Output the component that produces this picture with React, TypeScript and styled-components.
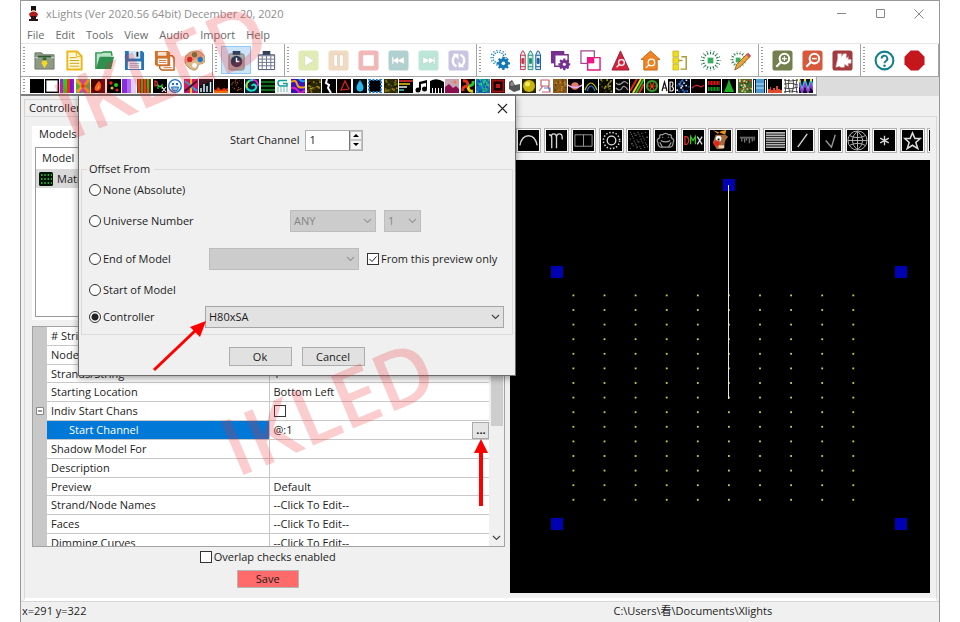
import React from 'react';
import styled, { createGlobalStyle } from 'styled-components';

const GlobalStyle = createGlobalStyle`
  * { box-sizing: border-box; }
  body { margin: 0; background: #fff; }
  body, button, input, select, table {
    font-family: "Open Sans", "Noto Sans CJK SC", sans-serif;
    font-size: 11px;
    line-height: 14px;
    color: #1c1c1c;
  }
  button { padding: 0; border: 0; background: none; }
  svg { display: block; flex: none; }
`;

/* ---------- window frame ---------- */

const Page = styled.div`
  padding: 0 20px;
`;
const Window = styled.main`
  position: relative;
  display: flex;
  flex-direction: column;
  min-height: 100vh;
  border: 1px solid #989898;
  background: #fff;
  overflow: hidden;
`;
const TitleBar = styled.header`
  display: flex;
  align-items: center;
  height: 25px;
  padding: 0 4px 0 7px;
  gap: 7px;
`;
const Title = styled.h1`
  flex: 1;
  margin: 0;
  font-size: 11px;
  font-weight: 400;
  color: #8e8e8e;
`;
const CaptionButton = styled.button`
  display: grid;
  place-items: center;
  width: 32px;
  height: 24px;
`;
const MenuBar = styled.nav`
  display: flex;
  align-items: center;
  gap: 11px;
  height: 17px;
  padding-left: 6px;
`;
const MenuLink = styled.a`
  color: #6a6a6a;
  text-decoration: none;
`;

/* ---------- toolbars ---------- */

const ToolRow = styled.div`
  display: flex;
  height: 34px;
  border-top: 1px solid #e6e6e6;
  border-bottom: 1px solid #a6a6a6;
`;
const ToolGroup = styled.div<{ $grow?: boolean }>`
  display: flex;
  align-items: center;
  flex: ${(p) => (p.$grow ? '1' : 'none')};
  padding: 0 3px 0 2px;
  border-right: 1px solid #a6a6a6;
`;
const Grip = styled.span<{ $tall?: boolean }>`
  width: 2px;
  height: ${(p) => (p.$tall ? '26px' : '14px')};
  margin-right: 4px;
  background: repeating-linear-gradient(#9c9c9c 0 1px, transparent 1px 3px);
`;
const ToolButton = styled.button<{ $active?: boolean; $dim?: boolean }>`
  display: grid;
  place-items: center;
  width: 30px;
  height: 28px;
  border: 1px solid ${(p) => (p.$active ? '#90c8f6' : 'transparent')};
  background: ${(p) => (p.$active ? '#cce4f7' : 'none')};
  opacity: ${(p) => (p.$dim ? 0.5 : 1)};
`;
const EffectStrip = styled.div`
  background: #dcdcdc;
`;
const EffectBar = styled.div`
  display: flex;
  align-items: center;
  width: 86.7%;
  height: 19px;
  padding-left: 2px;
  border-right: 1px solid #a6a6a6;
  border-bottom: 2px solid #7d7d7d;
  background: #fff;
`;
const EffectGrid = styled.div`
  flex: 1;
  display: grid;
  grid-template-columns: repeat(51, minmax(0, 1fr));
  padding-right: 2px;
`;
const EffectButton = styled.button`
  display: grid;
  place-items: center;
`;

/* ---------- notebook ---------- */

const Notebook = styled.section`
  flex: 1;
  display: flex;
  flex-direction: column;
  padding: 3px 2px 0 3px;
  background: #f0f0f0;
`;
const Tabs = styled.div`
  display: flex;
`;
const Tab = styled.button`
  height: 17px;
  padding: 0 4px;
  border: 1px solid #d4d4d4;
  border-bottom: 0;
`;
const Panel = styled.div`
  flex: 1;
  display: flex;
  padding: 1px;
  border: solid #d9d9d9;
  border-width: 1px 1px 0;
  border-bottom: 3px solid #fff;
  background: #f0f0f0;
`;
const LeftColumn = styled.div`
  flex: none;
  width: 53.3%;
  padding: 8px 5px 0 6px;
`;
const ModelsBox = styled.section`
  padding: 0 3px 3px;
  background: #fff;
  margin-bottom: 6px;
`;
const ModelsTitle = styled.h2`
  margin: 0;
  padding: 1px 0 6px 4px;
  font-size: 11px;
  font-weight: 400;
`;
const ModelList = styled.div`
  height: 170px;
  border: 1px solid #9a9a9a;
`;
const ListHead = styled.div`
  padding: 3px 6px 4px;
`;
const ListRow = styled.div`
  display: flex;
  align-items: center;
  gap: 4px;
  height: 19px;
  padding-left: 3px;
  background: #d9d9d9;
`;

/* ---------- property grid ---------- */

const PropertyFrame = styled.div`
  display: flex;
  height: 221px;
  border: 1px solid #a2a2a2;
  overflow: hidden;
`;
const PropertyTable = styled.table`
  flex: 1;
  height: 226px;
  table-layout: fixed;
  border-collapse: collapse;
  background: #fff;
`;
const GutterCell = styled.td`
  width: 14px;
  padding: 0 0 0 3px;
  background: #c8c8c8;
`;
const NameCell = styled.th<{ $selected?: boolean; $indent?: boolean }>`
  width: 222px;
  padding: 0 0 0 ${(p) => (p.$indent ? '22px' : '4px')};
  border: solid #c8c8c8;
  border-width: 0 1px 1px 0;
  font-weight: 400;
  text-align: left;
  color: ${(p) => (p.$selected ? '#fff' : 'inherit')};
  background: ${(p) => (p.$selected ? '#0078d7' : '#fff')};
`;
const ValueCell = styled.td`
  padding: 0 0 0 4px;
  border-bottom: 1px solid #c8c8c8;
`;
const ValueLine = styled.div`
  display: flex;
  justify-content: space-between;
  align-items: center;
  height: 17px;
`;
const EllipsisButton = styled.button`
  width: 17px;
  height: 17px;
  border: 1px solid #a9a9a9;
  background: #e4e4e4;
  font-weight: 700;
`;
const ScrollTrack = styled.div`
  display: flex;
  flex-direction: column;
  justify-content: space-between;
  align-items: center;
  width: 15px;
  padding: 0 1px 5px;
  background: #f0f0f0;
`;
const ScrollThumb = styled.div`
  width: 12px;
  height: 99px;
  background: #cdcdcd;
`;
const Footer = styled.div`
  display: flex;
  flex-direction: column;
  align-items: center;
  gap: 6px;
  padding: 3px 2px 0 0;
`;
const SaveButton = styled.button`
  width: 62px;
  height: 18px;
  border: 1px solid #b5b5b5;
  background: #ff6b6b;
`;

/* ---------- shared form parts ---------- */

const CheckLabel = styled.label`
  display: flex;
  align-items: center;
  gap: 2px;
`;
const Check = styled.input`
  appearance: none;
  flex: none;
  width: 12px;
  height: 12px;
  margin: 0;
  border: 1px solid #333;
  background: #fff;
  &:checked {
    background: #fff url("data:image/svg+xml,%3Csvg xmlns='http://www.w3.org/2000/svg' viewBox='0 0 10 10'%3E%3Cpath d='M1.5 5 4 7.500 8.500 2.500' fill='none' stroke='%23222'/%3E%3C/svg%3E") center / 10px;
  }
`;
const Radio = styled.input`
  appearance: none;
  flex: none;
  width: 12px;
  height: 12px;
  margin: 0;
  border: 1px solid #333;
  border-radius: 50%;
  background: #fff;
  &:checked { background: radial-gradient(circle, #222 0 3px, #fff 4px); }
`;

/* ---------- preview ---------- */

const PreviewColumn = styled.div`
  flex: 1;
  min-width: 0;
  display: flex;
  flex-direction: column;
  padding: 10px 5px 4px 0;
`;
const ModelBar = styled.div`
  display: grid;
  grid-template-columns: repeat(15, minmax(0, 1fr)) 3px;
  height: 32px;
  padding-left: 6px;
  overflow: hidden;
`;
const ModelButton = styled.button`
  display: grid;
  place-items: center;
  width: 25px;
  height: 25px;
  border: 1px solid #b4b4b4;
  background: #fdfdfd;
`;
const Canvas = styled.div`
  flex: 1;
  background: #000;
  overflow: hidden;
`;
const StatusBar = styled.footer`
  display: grid;
  grid-template-columns: 64.5% 1fr;
  align-items: center;
  height: 21px;
  padding: 0 0 2px 1px;
  border-top: 1px solid #d6d6d6;
  background: #f0f0f0;
`;

/* ---------- dialog ---------- */

const Dialog = styled.section`
  position: absolute;
  top: 94px;
  left: 57px;
  width: 438px;
  border: 1px solid #6b6b6b;
  background: #f0f0f0;
  box-shadow: 0 2px 7px rgba(0, 0, 0, 0.4);
`;
const DialogTitle = styled.header`
  display: flex;
  justify-content: flex-end;
  align-items: center;
  height: 25px;
  padding-right: 7px;
  background: #fff;
`;
const StartRow = styled.div`
  display: flex;
  align-items: center;
  gap: 5px;
  height: 38px;
  padding-left: 151px;
`;
const Spin = styled.div`
  display: flex;
  width: 58px;
  height: 21px;
  border: 1px solid #b0b0b0;
`;
const SpinInput = styled.input`
  flex: 1;
  min-width: 0;
  padding: 0 4px;
  border: 0;
  border-right: 1px solid #777;
  background: #fff;
`;
const SpinButtons = styled.div`
  display: grid;
  grid-template-rows: 1fr 1fr;
  width: 12px;
`;
const SpinButton = styled.button`
  display: grid;
  place-items: center;
  border: 1px solid #c4c4c4;
  background: #f4f4f4;
`;
const Group = styled.fieldset`
  margin: 3px 2px 0;
  padding: 0 8px 0 5px;
  border: 1px solid #dadada;
`;
const Legend = styled.legend`
  padding: 0 4px 0 2px;
`;
const OptionRow = styled.div<{ $height: number }>`
  display: flex;
  align-items: center;
  height: ${(p) => p.$height}px;
  padding-left: 2px;
`;
const OptionLabel = styled.label<{ $width?: number }>`
  display: flex;
  align-items: center;
  gap: 2px;
  flex: none;
  width: ${(p) => (p.$width ? `${p.$width}px` : 'auto')};
`;
const Combo = styled.span<{ $width?: number; $gap?: number; $off?: boolean }>`
  display: grid;
  grid-template-columns: 1fr 16px;
  align-items: center;
  flex: ${(p) => (p.$width ? 'none' : '1')};
  width: ${(p) => (p.$width ? `${p.$width}px` : 'auto')};
  height: 22px;
  margin-right: ${(p) => p.$gap || 0}px;
  border: 1px solid ${(p) => (p.$off ? '#bdbdbd' : '#a6a6a6')};
  background: ${(p) => (p.$off ? '#cccccc' : '#e2e2e2')};
`;
const ComboSelect = styled.select`
  appearance: none;
  grid-area: 1 / 1 / 2 / 3;
  width: 100%;
  height: 20px;
  padding: 0 3px;
  border: 0;
  background: none;
  opacity: 1;
  &:disabled { color: #848484; }
`;
const ComboArrow = styled.span`
  display: grid;
  place-items: center;
  grid-area: 1 / 2;
  pointer-events: none;
`;
const DialogButtons = styled.div`
  display: flex;
  justify-content: center;
  gap: 10px;
  padding: 12px 1px 9px 0;
`;
const DialogButton = styled.button`
  width: 63px;
  height: 19px;
  border: 1px solid #adadad;
  background: #e1e1e1;
`;

/* ---------- annotations ---------- */

const Watermark = styled.span<{ $x: number; $y: number }>`
  position: absolute;
  left: ${(p) => p.$x}px;
  top: ${(p) => p.$y}px;
  transform: translate(-50%, -50%) rotate(-23deg);
  font-size: 80px;
  font-weight: 600;
  line-height: 80px;
  color: rgba(240, 40, 48, 0.23);
  pointer-events: none;
`;
const Pointer = styled.svg<{ $x: number; $y: number }>`
  position: absolute;
  left: ${(p) => p.$x}px;
  top: ${(p) => p.$y}px;
  pointer-events: none;
`;

/* ---------- drawings ---------- */

const burst = (cx: number, cy: number, r1: number, r2: number, n: number) =>
  Array.from({ length: n }, (_, i) => {
    const a = (i / n) * Math.PI * 2;
    return `M${(cx + r1 * Math.cos(a)).toFixed(1)} ${(cy + r1 * Math.sin(a)).toFixed(1)}L${(cx + r2 * Math.cos(a)).toFixed(1)} ${(cy + r2 * Math.sin(a)).toFixed(1)}`;
  }).join('');

const Gear = ({ x, y, r, c }: { x: number; y: number; r: number; c: string }) => (
  <g>
    <path d={burst(x, y, r - 1, r + 1.6, 8)} stroke={c} strokeWidth="2.4" />
    <circle cx={x} cy={y} r={r} fill={c} />
    <circle cx={x} cy={y} r={r * 0.35} fill="#fff" />
  </g>
);
const Crayon = ({ x, c }: { x: number; c: string }) => (
  <g stroke={c} fill="#d8eef2">
    <path d={`M${x} 20.500V5l2-4h1l2 4v15.500z`} />
    <path d={`M${x} 5.500h5M${x} 17.500h5`} />
    <path d={`M${x + 1.5} 9h2v5h-2z`} fill={c} />
  </g>
);
const Lens = ({ x, y, r }: { x: number; y: number; r: number }) => (
  <g fill="none" stroke="#fff" strokeWidth={r > 4 ? 2.2 : 1.3}>
    <circle cx={x} cy={y} r={r} />
    <path d={`M${x - r * 0.7} ${y + r * 0.7}l-${r} ${r}`} />
  </g>
);
const Sheet = ({ c, children }: { c: string; children?: React.ReactNode }) => (
  <g><rect x="0.500" y="0.500" width="21" height="21" rx="3" fill={c} />{children}</g>
);

const toolGroups: { name: string; art: React.ReactNode; active?: boolean; dim?: boolean }[][] = [
  [
    { name: 'Show folder', art: <><path d="M1 3h7l2 2h11v15H1z" fill="#8f9a86" stroke="#6c7666" /><path d="M1 8h20" stroke="#dfe3d8" /><path d="M4 7h14" stroke="#2e5c2f" strokeWidth="2" /><path d="M9 8h4v3h-4z" fill="#2c6b2f" /><path d="M9 11h4l1 3-3 5-3-5z" fill="#f6d91c" /></> },
    { name: 'New', art: <><path d="M3.500 1.500h10l5 5v14h-15z" fill="#fff8d6" stroke="#eab818" strokeWidth="2" /><path d="M13 2v5h5" fill="none" stroke="#eab818" /><path d="M6 8h7M6 11h10M6 14h10M6 17h10" stroke="#d0a31c" /></> },
    { name: 'Open', art: <><path d="M2 20V3h6l2-1h8l1 4" fill="#b9e5c6" stroke="#2d9150" strokeWidth="1.5" /><path d="M6 7h15l-3 13H2z" fill="#2f8f4e" /></> },
    { name: 'Save', art: <><path d="M1 1h18l2 2v18H1z" fill="#2474b9" /><path d="M5 1h12v8H5z" fill="#d5e8f6" /><path d="M13 2h2v5h-2z" fill="#222" /><path d="M4 12h14v8H4z" fill="#fff" /><path d="M6 14h10M6 16h10M6 18h10" stroke="#7aa6cd" /></> },
    { name: 'Save as', art: <><path d="M6 6h13l2 2v13H8l-2-2z" fill="#fff" stroke="#b8641e" strokeWidth="1.5" /><path d="M1 1h14l2 2v14H3l-2-2z" fill="#d0702a" /><path d="M4 2h9v4H4z" fill="#f7e3d2" /><path d="M4 9h10v6H4z" fill="#fff" /><path d="M5 11h8M5 13h8M10 18.500h9" stroke="#c97b44" /></> },
    { name: 'Colors', art: <><path d="M1 11C1 5 6 1 12 1s10 4 10 9-4 4-6 5-1 6-5 6S1 17 1 11z" fill="#dcb98c" stroke="#b98d58" /><circle cx="6" cy="10" r="2.800" fill="#cf2328" /><circle cx="11" cy="5" r="2.800" fill="#5d7f3a" /><circle cx="17" cy="10" r="2.800" fill="#2375bd" /><circle cx="11" cy="16" r="2.500" fill="#fff" /></> },
  ],
  [
    { name: 'Clock', active: true, art: <><rect x="3" y="4" width="16" height="17" rx="2" fill="#a8a8a8" stroke="#858585" /><path d="M7 1h8v4H7z" fill="#33405a" /><circle cx="11" cy="12" r="6" fill="#2b3754" /><path d="M11 8v4h3" stroke="#fff" strokeWidth="1.500" fill="none" /></> },
    { name: 'Calendar', art: <><path d="M2.500 5h17v15.500h-17z" fill="#fff" stroke="#4c546c" /><path d="M3 6h16M2 9.500h18M2 13h18M2 16.500h18M6.500 6v15M11 6v15M15.500 6v15" stroke="#6c738a" /><path d="M7 1h8v4H7z" fill="#33405a" /></> },
  ],
  [
    { name: 'Play', dim: true, art: <Sheet c="#c5d96f"><path d="M7 5l10 6-10 6z" fill="#fff" stroke="#98a95c" strokeWidth=".6" /></Sheet> },
    { name: 'Pause', dim: true, art: <Sheet c="#e5b686"><path d="M6 5h4v12H6zM12 5h4v12h-4z" fill="#fff" stroke="#b58c66" strokeWidth=".6" /></Sheet> },
    { name: 'Stop', dim: true, art: <Sheet c="#e87070"><path d="M5 5h12v12H5z" fill="#fff" stroke="#bd5f5f" strokeWidth=".6" /></Sheet> },
    { name: 'Previous', dim: true, art: <Sheet c="#66a3a3"><path d="M4 7h2v3l5-3v3l6-3v8l-6-3v3l-5-3v3H4z" fill="#fff" stroke="#588a87" strokeWidth=".6" /></Sheet> },
    { name: 'Next', dim: true, art: <Sheet c="#7bd1b3"><path d="M18 7h-2v3l-5-3v3L5 7v8l6-3v3l5-3v3h2z" fill="#fff" stroke="#5a9f87" strokeWidth=".6" /></Sheet> },
    { name: 'Repeat', dim: true, art: <Sheet c="#968bc8"><path d="M9 17a6.500 6.500 0 0 1-1-11.500M13 5a6.500 6.500 0 0 1 1 11.500" fill="none" stroke="#fff" strokeWidth="2.400" /><path d="M5 4h6v6zM17 18h-6v-6z" fill="#fff" /></Sheet> },
  ],
  [
    { name: 'Render', art: <><path d={burst(9, 8, 5, 8.5, 14)} stroke="#1583b4" strokeWidth="1.400" strokeDasharray="1.500 .7" /><Gear x={14} y={14} r={5.4} c="#1578b6" /></> },
    { name: 'Crayons', art: <><Crayon x={0.5} c="#c83246" /><Crayon x={8.5} c="#19917a" /><Crayon x={16.5} c="#175aa0" /></> },
    { name: 'Preview settings', art: <><path d="M1 1h14v13H1z" fill="#77308f" /><path d="M5 5h14v12H5z" fill="#fff" stroke="#77308f" strokeWidth="1.500" /><Gear x={15} y={15} r={4.6} c="#77308f" /></> },
    { name: 'Layers', art: <><path d="M1 1h14v13H1z" fill="#fff" stroke="#a0488d" strokeWidth="1.300" /><path d="M8 8h13v13H8z" fill="#fff" stroke="#e01b84" strokeWidth="1.500" /><path d="M8 8h7v6H8z" fill="#f0148a" /></> },
    { name: 'Model preview', art: <><path d="M11 1l9 20H2z" fill="#d4233e" stroke="#a11a30" /><Lens x={12} y={13} r={3} /></> },
    { name: 'House preview', art: <><path d="M11 1l10 9h-3v11H4V10H1z" fill="#ee8424" stroke="#c46a1a" /><Lens x={12} y={13} r={3.4} /></> },
    { name: 'Display elements', art: <><path d="M3 1h6v6H3zM3 8h6v6H3zM3 15h6v6H3z" fill="#f2dc18" stroke="#b5a316" strokeWidth=".6" /><path d="M9 11h4M12 7h5v13h-6" fill="none" stroke="#a99a33" strokeWidth="1.500" /></> },
    { name: 'Jukebox', art: <><path d={burst(11, 11, 6.5, 10.5, 16)} stroke="#2d7c4f" strokeWidth="1.300" strokeDasharray="2.500 .6" /><path d="M8 8h6v6H8z" fill="#37ad61" /></> },
    { name: 'Edit effects', art: <><path d={burst(9, 10, 5.5, 8.5, 14)} stroke="#2d7c4f" strokeWidth="1.300" strokeDasharray="2 .6" /><path d="M6 8h5v5H6z" fill="#37ad61" /><path d="M5 21l2-6L18 4l3 3-11 11z" fill="#e9a53a" stroke="#96601d" /><path d="M17 5l2-2 3 3-2 2z" fill="#cf5060" /></> },
  ],
  [
    { name: 'Zoom in', art: <Sheet c="#73804d"><Lens x={13} y={9} r={5} /><path d="M10.500 9h5M13 6.500v5" stroke="#fff" strokeWidth="1.300" /></Sheet> },
    { name: 'Zoom out', art: <Sheet c="#d9583c"><Lens x={13} y={9} r={5} /><path d="M10.500 9h5" stroke="#fff" strokeWidth="1.500" /></Sheet> },
    { name: 'Sketch', art: <Sheet c="#a33b3e"><path d="M6 4h4v3l2-3h3v5l2-2v3h3v4h-3v3l-4-2v3H9l-1-1-4 1 2-9z" fill="#fff" stroke="#e0c0c0" strokeWidth=".5" /></Sheet> },
  ],
  [
    { name: 'Help', art: <><circle cx="11" cy="11" r="9.300" fill="#fff" stroke="#137f8c" strokeWidth="2.200" /><path d="M8 9a3 3 0 1 1 4.500 2.500Q11 12.500 11 14" fill="none" stroke="#137f8c" strokeWidth="2" /><circle cx="11" cy="16.500" r="1.300" fill="#137f8c" /></> },
    { name: 'Stop all', art: <path d="M7 .5h8l6.500 6.500v8L15 21.500H7L.5 15V7z" fill="#c4161c" /> },
  ],
];

const speckle = (colors: string[], seed: number, n = 26, size = 1.6) =>
  Array.from({ length: n }, (_, i) => {
    const x = ((i * 37 + i * i * 7 + seed * 13) % 61) / 61 * 12.5;
    const y = ((i * 23 + i * i * 3 + seed * 29) % 53) / 53 * 12.5;
    return <rect key={i} x={x} y={y} width={size} height={size} fill={colors[i % colors.length]} />;
  });
const line = (d: string, c: string, w = 1.2) => <path d={d} stroke={c} strokeWidth={w} fill="none" />;

const effects: [string, string, React.ReactNode][] = [
  ['Off', '#000', null],
  ['On', '#fff', <rect x=".7" y=".7" width="12.600" height="12.600" fill="#fff" stroke="#000" strokeWidth="1.400" />],
  ['Bars', '#6a1ed0', <><path d="M0 0h3v14H0z" fill="#a020e0" /><path d="M3 0h4v14H3z" fill="#26d022" /><path d="M7 0h3v14H7z" fill="#f02a12" /><path d="M12 0h2v14h-2z" fill="#9414d8" /></>],
  ['Butterfly', '#57a93c', <>{line('M0 1l13 12M13 1L1 13', '#f0a021', 3)}{line('M4 0l3 4 3-4M4 14l3-4 3 4', '#d43fc8', 2)}<circle cx="7" cy="7" r="2" fill="#e33" /></>],
  ['Candle', '#4a0805', <><path d="M8 2c4 4 2 10-2 10S3 7 8 2z" fill="#ff5a1c" /><path d="M8 6c1 2 0 4-2 4" fill="#ffc04a" /></>],
  ['Circles', '#050505', <><circle cx="4" cy="4" r="1.700" fill="#e22" /><circle cx="9" cy="6" r="2" fill="#28c828" /><circle cx="5" cy="9" r="1.500" fill="#e8c01a" /><circle cx="10" cy="11" r="1.500" fill="#e22" /></>],
  ['Color wash', '#b46cf2', <><path d="M0 0h5v14H0z" fill="#8a2ce0" /><path d="M9 0h5v14H9z" fill="#e7cffb" /></>],
  ['Curtain', '#6a3b08', <>{line('M2 0v14M8 0v14', '#d8451a', 2)}{line('M5 0v14M11 0v14', '#5da01a', 2)}</>],
  ['DMX', '#000', <>{line('M2 2v5q3 0 2-4z', '#e33')}{line('M5 10V6l2 2 2-2v4', '#3c3')}{line('M9 8l4 5M13 8l-4 5', '#eee')}</>],
  ['Faces', '#fff', <><circle cx="7" cy="7" r="6.300" fill="#f4faff" stroke="#1f6fc0" strokeWidth="1.300" /><path d="M3.500 8h7q0 4-3.500 4T3.500 8z" fill="#8cc4ee" stroke="#1f6fc0" /><path d="M4 4h2v2H4zM8 4h2v2H8z" fill="#1f6fc0" /></>],
  ['Fan', '#c81f72', <>{line('M7 7L7 0M7 7v7', '#f6d21c', 2)}{line('M7 7L1 2M7 7l6 5', '#15b1e8', 2)}{line('M7 7l6-5M7 7L1 12', '#150a30', 2)}</>],
  ['Spectrum', '#08131c', <>{line('M2 13V9M5 13V5M8 13V7M11.500 13V3', '#dff0f8', 1.500)}</>],
  ['Fire', '#140200', <><path d="M0 14v-4l2 1 2-3 3 3 3-2 2 1 2-1v5z" fill="#e23a06" /><path d="M0 12h14v2H0z" fill="#ff9a10" opacity=".6" /></>],
  ['Fireworks', '#080302', speckle(['#b4531a', '#6c2c0f', '#d88a38'], 3, 20, 1)],
  ['Galaxy', '#10203a', <>{line('M7 7c1-3 5-1 4 2s-7 4-9 0 1-8 6-8', '#1be0c0', 2)}{line('M8 1c4 0 5 4 5 6', '#e41ad8', 2)}{line('M2 9c-1-3 0-5 2-7', '#b8e01a', 1.500)}</>],
  ['Garlands', '#041004', <>{line('M0 3h14M0 7h14M0 11h14', '#1a8a22', 1.500)}</>],
  ['Glediator', '#fff', <>{line('M11 1.500H4Q2 1.500 2 4t2 3h7V4.500H7', '#139c9c', 1.500)}{line('M2 8v5M5 8v5M8 8v5M11 8v5', '#8fcaca')}</>],
  ['Plasma', '#3a16b8', <>{line('M0 3q5-3 6 2t8 3', '#f2a012', 2)}{line('M0 9q5-1 7 3t7-1', '#e21ab6', 2)}{line('M8 0q3 3 6 2', '#18a8e8', 2)}</>],
  ['Kaleidoscope', '#2a2504', speckle(['#8f7b16', '#5c4d0b', '#b59a24', '#141003'], 1)],
  ['Life', '#000', <>{line('M5 0l-1 4 3 2-1 3 3 5', '#fff', 2)}</>],
  ['Lightning', '#120303', <>{line('M4 11l4-9 4 8z', '#cc2a20')}</>],
  ['Liquid', '#020d18', <path d="M7 1q5 7 3 10-3 3-6 0Q2 8 7 1z" fill="#2ab7e8" />],
  ['Marquee', '#fff', <><rect x="1" y="1" width="12" height="12" fill="#000" stroke="#1d79c8" strokeWidth="2" strokeDasharray="2 1.400" /></>],
  ['Meteors', '#2c2a06', speckle(['#8c7d1c', '#466a14', '#b07a1c', '#101002'], 5)],
  ['Morph', '#000', <>{line('M0 2h14', '#e33', 1.500)}{line('M0 5h11', '#f0c81a', 1.500)}{line('M0 8h8', '#eee', 1.500)}{line('M0 11h5', '#3cc', 1.500)}</>],
  ['Music', '#fff', <><path d="M5 3l8-2v9h-1V4L7 5v6H5z" fill="#000" /><circle cx="4" cy="11" r="2.500" /><circle cx="10.500" cy="10" r="2.500" /></>],
  ['Piano', '#fff', <><path d="M0 2q7-4 14 1v11h-2V9h-1v5H9V9H8v5H6V9H5v5H3V9H2v5H0z" /></>],
  ['Pictures', '#c9a3b3', <><path d="M0 8l4-3 4 4 3-2 3 3v4H0z" fill="#8e0f4f" /><circle cx="10" cy="3" r="1.500" fill="#f27a3a" /></>],
  ['Pinwheel', '#150400', <>{line('M7 7Q7 1 2 2', '#e8321a', 3)}{line('M7 7q6 0 5-5', '#28c828', 3)}{line('M7 7q0 6 5 5', '#e8d21a', 3)}{line('M7 7q-6 0-5 5', '#e8321a', 3)}</>],
  ['Plasma wave', '#1670b4', speckle(['#22c86c', '#12409c', '#1aa7c2', '#2fe06c'], 8, 40)],
  ['Ripple', '#190202', <><rect x="1.500" y="1.500" width="11" height="11" fill="none" stroke="#9c1414" strokeWidth="2" /><path d="M5 5h4v4H5z" fill="#c01a1a" /></>],
  ['Servo', '#fff', <><path d="M2 3l3-2 3 5 5-1v6l-6 2-5-3z" fill="#555" /><circle cx="5" cy="5" r="2" fill="#8a8a8a" /></>],
  ['Shape', '#2b2702', <><circle cx="7" cy="7" r="6" fill="#c8b40e" /><circle cx="5.500" cy="5" r="2.500" fill="#f3ea5c" /></>],
  ['Sketch', '#fff', <>{line('M3 1h8v6H3zM1 12l4-5M4 13h8l-2-6', '#c85a6a')}{line('M6 9h6v3', '#5a7ac8')}</>],
  ['Shimmer', '#8a5a18', speckle(['#c8872c', '#5a380c', '#a36c1e'], 4)],
  ['Saturn', '#0a0208', <><circle cx="7" cy="7" r="3.800" fill="#e07a6a" />{line('M0 6q7 5 14 0', '#e8b0f0', 1.500)}</>],
  ['Single strand', '#02070a', <>{line('M1 11Q7-3 13 11', '#d2b414')}{line('M3 12Q7 2 11 12', '#2a7de0')}</>],
  ['Snowflakes', '#0d0c02', speckle(['#8c8a1a', '#46460c', '#b5b52a'], 9, 18)],
  ['Snowstorm', '#0a0a0a', <>{line('M1 4q3 3 6 0t6 1M1 9q4 4 6 0t6 2', '#9c9c9c')}</>],
  ['Spirals', '#0a0a02', <>{line('M0 12L7 0M9 14l5-9', '#e22a1a', 2)}{line('M3 14L11 0', '#e8d81a', 2)}{line('M6 14l8-14', '#28b828', 2)}</>],
  ['Spirograph', '#0c1c04', <><circle cx="7" cy="7" r="5" fill="none" stroke="#3c9a28" strokeWidth="2" />{line(burst(7, 7, 0, 4, 6), '#d83a1a')}</>],
  ['Text', '#fff', <><path d="M7 0h7v14H7z" />{line('M1 12L3.500 3 6 12M2 9h3', '#111')}{line('M9 3v9h2q3-2 0-4.500Q13 4 11 3z', '#eee')}</>],
  ['Twinkle', '#020a1c', speckle(['#3a7ad8', '#e8f0ff', '#1a4a9c'], 7, 22)],
  ['Tendril', '#080202', <>{line('M1 9q4-4 7-2t5-1', '#d02a2a')}</>],
  ['Tune to', '#000', <>{line('M1 4h12', '#d01a1a', 4)}{line('M1 10h12', '#1a8c24', 4)}{line('M3 2v10M6 2v10M9 2v10M12 2v10', '#000', .7)}</>],
  ['Tree', '#000', <path d="M7 0l2 6 3 7H2l3-7z" fill="#1cae24" />],
  ['Warp', '#4a6a2a', speckle(['#e8e0b0', '#1a4a1a', '#d0362a', '#bcd06a'], 2, 32)],
  ['Video', '#12202c', <><path d="M3 0h8v14H3z" fill="#4a9ad0" />{line('M1.500 1v13M12.500 1v13', '#fff', 1)}{line('M3 5h8M3 9h8', '#bfe0f4')}</>],
  ['VU meter', '#000', <path d="M0 14v-4h2V8h1v3h2V9h2v2h1V7h2v3h2v1h2v3z" fill="#e2482a" />],
  ['Warp grid', '#fff', <>{line('M0 1q7 2 14 0M0 5q7-2 14 1M0 9q7 2 14-1M0 13q7-2 14 0M1 0q2 7 0 14M5 0q-2 7 1 14M9 0q2 7-1 14M13 0q-2 7 0 14', '#333', .9)}</>],
  ['Wave', '#150a30', <>{line('M0 1l3 11L6 2l3 10 3-10 2 8', '#2ad0c8', 2.400)}{line('M0 4l3 9L6 5l3 8 3-8 2 6', '#b02ad8', 1.500)}{line('M0 0l1 3M6 0v2M12 0v2', '#f0e02a', 2)}</>],
];

const bulbs = Array.from({ length: 40 }, (_, i) => {
  const x = 2 + ((i * 7) % 19);
  const y = 2 + ((i * 13 + (i % 5) * 3) % 18);
  return <rect key={i} x={x} y={y} width="1" height="1" fill="#8a8a8a" />;
});
const wire = (d: string, c = '#d8d8d8', w = 1.4) => <path d={d} fill="none" stroke={c} strokeWidth={w} />;

const modelTypes: [string, React.ReactNode][] = [
  ['Arches', wire('M2 16Q4 6 11 6t9 10')],
  ['Candy canes', wire('M6 19V8q-1-4 2-4t3 4v11M11 8q0-4 3-4t3 4v2M6 8Q6 5 3 5')],
  ['Channel block', wire('M2 5h18v12H2zM11 5v12', '#9a9a9a', 1)],
  ['Circle', <><circle cx="11" cy="11" r="4.500" fill="none" stroke="#ddd" strokeWidth="1.400" /><circle cx="11" cy="11" r="8.500" fill="none" stroke="#ddd" strokeWidth="1.600" strokeDasharray="1.500 1.900" /></>],
  ['Cube', bulbs],
  ['Custom', wire('M5 8Q4 4 8 5q3-3 6 0 4-1 3 3 4 2 2 5 0 4-3 5H6q-3-1-3-5-2-3 2-5zM6 11q5 3 10 0M5 13l3 5M17 13l-3 5M8 7v1M14 7v1', '#a0a0a0', 1.200)],
  ['DMX', <>{wire('M2 7v8h2q2-1 2-4T4 7z', '#e02a2a')}{wire('M8 15V7l2.500 4L13 7v8', '#2ac82a')}{wire('M15 7l5 8M20 7l-5 8', '#ddd')}</>],
  ['Image', <><path d="M3 0l5 4 4-3 5-1-1 5z" fill="#e8921a" /><path d="M6 5h10l3 2-3 4-2 9H7L3 13z" fill="#a8693a" /><circle cx="9" cy="9" r="3" fill="#fff" /><path d="M8 9h2v2H8z" /><circle cx="7" cy="14" r="3" fill="#e3261a" /><path d="M9 16h6v3H9z" fill="#e8d0b0" /></>],
  ['Icicles', <><path d="M3 7h16v2H3z" fill="#666" />{wire('M5 9v3M8 9v4M10 9v2M13 9v5M16 9v3M18 9v2', '#777')}</>],
  ['Matrix', wire('M1 3h20M1 5.500h20M1 8h20M1 10.500h20M1 13h20M1 15.500h20M1 18h20', '#b4b4b4', 1.600)],
  ['Single line', wire('M6 18L16 4')],
  ['Poly line', wire('M6 11l6 7 4-13', '#9a9a9a')],
  ['Sphere', <>{wire('M1 11a10 10 0 1 0 20 0 10 10 0 1 0-20 0M11 1v20M1 11h20M3 6q8 4 16 0M3 16q8-4 16 0M11 1q-11 10 0 20M11 1q11 10 0 20', '#b0b0b0', 1)}</>],
  ['Spinner', wire('M11 6v10M6.500 8.500l9 5M15.500 8.500l-9 5')],
  ['Star', wire('M11 3l2.500 6H19l-4.500 4 2 6.500L11 16l-5.500 3.500 2-6.500L3 9h5.500z', '#ddd', 1.600)],
  ['Tree', null],
];

const Chevron = ({ color = '#444' }: { color?: string }) => (
  <svg width="9" height="6" viewBox="0 0 9 6"><path d="M1 1l3.500 3.500L8 1" fill="none" stroke={color} strokeWidth="1.200" /></svg>
);

const properties: { name: string; value?: string; kind?: 'check' | 'edit' }[] = [
  { name: '# Strings', value: '1' },
  { name: 'Nodes/String', value: '150' },
  { name: 'Strands/String', value: '1' },
  { name: 'Starting Location', value: 'Bottom Left' },
  { name: 'Indiv Start Chans', kind: 'check' },
  { name: 'Start Channel', value: '@:1', kind: 'edit' },
  { name: 'Shadow Model For' },
  { name: 'Description' },
  { name: 'Preview', value: 'Default' },
  { name: 'Strand/Node Names', value: '--Click To Edit--' },
  { name: 'Faces', value: '--Click To Edit--' },
  { name: 'Dimming Curves', value: '--Click To Edit--' },
];

const handles = [[219, 25], [47, 112], [391, 112], [47, 364], [391, 364]];

const MatrixPreview = () => (
  <svg width="420" height="433" viewBox="0 0 420 433" role="img" aria-label="Model preview">
    {handles.map(([x, y]) => (
      <rect key={`${x}-${y}`} x={x - 6} y={y - 6} width="12" height="12" fill="#0000b4" />
    ))}
    {Array.from({ length: 150 }, (_, i) => (
      <rect
        key={i}
        x={62.5 + (i % 10) * 31.1}
        y={134.5 + Math.floor(i / 10) * 14.6}
        width="1.800"
        height="1.800"
        fill="#ccd055"
      />
    ))}
    <path d="M218.500 25v214" stroke="#e8e8e8" />
  </svg>
);

function StartChannelDialog() {
  return (
    <Dialog role="dialog" aria-label="Start channel">
      <DialogTitle>
        <button aria-label="Close dialog">
          <svg width="11" height="11" viewBox="0 0 11 11"><path d="M1 1l9 9M10 1l-9 9" stroke="#222" strokeWidth="1.100" /></svg>
        </button>
      </DialogTitle>
      <StartRow>
        <label htmlFor="start">Start Channel</label>
        <Spin>
          <SpinInput id="start" defaultValue="1" />
          <SpinButtons>
            <SpinButton aria-label="Increase"><svg width="6" height="3" viewBox="0 0 6 3"><path d="M0 3l3-3 3 3z" /></svg></SpinButton>
            <SpinButton aria-label="Decrease"><svg width="6" height="3" viewBox="0 0 6 3"><path d="M0 0l3 3 3-3z" /></svg></SpinButton>
          </SpinButtons>
        </Spin>
      </StartRow>
      <Group>
        <Legend>Offset From</Legend>
        <OptionRow $height={28}>
          <OptionLabel><Radio type="radio" name="offset" />None (Absolute)</OptionLabel>
        </OptionRow>
        <OptionRow $height={34}>
          <OptionLabel $width={201}><Radio type="radio" name="offset" />Universe Number</OptionLabel>
          <Combo $width={86} $gap={8} $off>
            <ComboSelect disabled aria-label="Universe address"><option>ANY</option></ComboSelect>
            <ComboArrow><Chevron color="#999" /></ComboArrow>
          </Combo>
          <Combo $width={37} $off>
            <ComboSelect disabled aria-label="Universe"><option>1</option></ComboSelect>
            <ComboArrow><Chevron color="#999" /></ComboArrow>
          </Combo>
        </OptionRow>
        <OptionRow $height={42}>
          <OptionLabel $width={120}><Radio type="radio" name="offset" />End of Model</OptionLabel>
          <Combo $width={150} $gap={8} $off>
            <ComboSelect disabled aria-label="Model" />
            <ComboArrow><Chevron color="#999" /></ComboArrow>
          </Combo>
          <CheckLabel><Check type="checkbox" defaultChecked />From this preview only</CheckLabel>
        </OptionRow>
        <OptionRow $height={20}>
          <OptionLabel><Radio type="radio" name="offset" />Start of Model</OptionLabel>
        </OptionRow>
        <OptionRow $height={34}>
          <OptionLabel $width={116}><Radio type="radio" name="offset" defaultChecked />Controller</OptionLabel>
          <Combo>
            <ComboSelect aria-label="Controller name"><option>H80xSA</option></ComboSelect>
            <ComboArrow><Chevron /></ComboArrow>
          </Combo>
        </OptionRow>
      </Group>
      <DialogButtons>
        <DialogButton>Ok</DialogButton>
        <DialogButton>Cancel</DialogButton>
      </DialogButtons>
    </Dialog>
  );
}

export default function App() {
  return (
    <Page>
      <GlobalStyle />
      <Window>
        <TitleBar>
          <svg width="11" height="15" viewBox="0 0 11 15">
            <path d="M3 0h5v5H3z" fill="#1a1010" /><path d="M4 4h3v2H4z" fill="#d9a88a" /><path d="M3 6h5l2 2-1 3H2L1 8z" fill="#b01c1c" /><path d="M3 10h5v3H3zM1 13h9v2H1z" fill="#281414" />
          </svg>
          <Title>xLights (Ver 2020.56 64bit) December 20, 2020</Title>
          <CaptionButton aria-label="Minimize"><svg width="9" height="9" viewBox="0 0 9 9"><path d="M0 4.500h9" stroke="#888" /></svg></CaptionButton>
          <CaptionButton aria-label="Maximize"><svg width="9" height="9" viewBox="0 0 9 9"><path d="M.5.5h8v8h-8z" fill="none" stroke="#888" /></svg></CaptionButton>
          <CaptionButton aria-label="Close"><svg width="10" height="10" viewBox="0 0 10 10"><path d="M.5.5l9 9M9.500.5l-9 9" stroke="#888" /></svg></CaptionButton>
        </TitleBar>
        <MenuBar>
          {['File', 'Edit', 'Tools', 'View', 'Audio', 'Import', 'Help'].map((m) => (
            <MenuLink key={m} href="#">{m}</MenuLink>
          ))}
        </MenuBar>
        <ToolRow>
          {toolGroups.map((group, i) => (
            <ToolGroup key={i} $grow={i === toolGroups.length - 1}>
              <Grip $tall />
              {group.map((t) => (
                <ToolButton key={t.name} aria-label={t.name} $active={t.active} $dim={t.dim}>
                  <svg width="21" height="21" viewBox="0 0 22 22">{t.art}</svg>
                </ToolButton>
              ))}
            </ToolGroup>
          ))}
        </ToolRow>
        <EffectStrip>
          <EffectBar>
            <Grip />
            <EffectGrid>
              {effects.map(([name, bg, art]) => (
                <EffectButton key={name} aria-label={name}>
                  <svg width="14" height="14" viewBox="0 0 14 14"><rect width="14" height="14" fill={bg} />{art}</svg>
                </EffectButton>
              ))}
            </EffectGrid>
          </EffectBar>
        </EffectStrip>
        <Notebook>
          <Tabs><Tab>Controllers</Tab></Tabs>
          <Panel>
            <LeftColumn>
              <ModelsBox>
                <ModelsTitle>Models</ModelsTitle>
                <ModelList>
                  <ListHead>Model</ListHead>
                  <ListRow>
                    <svg width="14" height="14" viewBox="0 0 14 14"><rect width="14" height="14" rx="1.500" fill="#041404" /><path d="M2 3h11M2 7h11M2 11h11" stroke="#3fd04a" strokeWidth="1.500" strokeDasharray="1.500 1.800" /></svg>
                    Matrix
                  </ListRow>
                </ModelList>
              </ModelsBox>
              <PropertyFrame>
                <PropertyTable>
                  <tbody>
                    {properties.map((p) => (
                      <tr key={p.name}>
                        <GutterCell>
                          {p.kind === 'check' && (
                            <svg width="8" height="8" viewBox="0 0 8 8"><path d="M.5.5h7v7h-7z" fill="#fff" stroke="#888" /><path d="M2 4h4" stroke="#333" /></svg>
                          )}
                        </GutterCell>
                        <NameCell scope="row" $selected={p.kind === 'edit'} $indent={p.kind === 'edit'}>{p.name}</NameCell>
                        <ValueCell>
                          <ValueLine>
                            {p.kind === 'check' ? <Check type="checkbox" aria-label={p.name} /> : p.value}
                            {p.kind === 'edit' && <EllipsisButton aria-label="Edit start channel">...</EllipsisButton>}
                          </ValueLine>
                        </ValueCell>
                      </tr>
                    ))}
                  </tbody>
                </PropertyTable>
                <ScrollTrack><ScrollThumb /><Chevron /></ScrollTrack>
              </PropertyFrame>
              <Footer>
                <CheckLabel><Check type="checkbox" />Overlap checks enabled</CheckLabel>
                <SaveButton>Save</SaveButton>
              </Footer>
            </LeftColumn>
            <PreviewColumn>
              <ModelBar>
                {modelTypes.map(([name, art]) => (
                  <ModelButton key={name} aria-label={name}>
                    <svg width="21" height="21" viewBox="0 0 22 22"><rect width="22" height="22" />{art}</svg>
                  </ModelButton>
                ))}
              </ModelBar>
              <Canvas><MatrixPreview /></Canvas>
            </PreviewColumn>
          </Panel>
        </Notebook>
        <StatusBar>
          <span>x=291 y=322</span>
          <span>C:\Users\看\Documents\Xlights</span>
        </StatusBar>
        <StartChannelDialog />
        <Pointer $x={130} $y={318} width="58" height="56" viewBox="0 0 58 56" aria-hidden="true">
          <path d="M3 51L45 11" stroke="#f00" strokeWidth="3" /><path d="M55 2L49 18 39 8z" fill="#f00" />
        </Pointer>
        <Pointer $x={452} $y={438} width="16" height="68" viewBox="0 0 16 68" aria-hidden="true">
          <path d="M8 67V12" stroke="#f00" strokeWidth="4" /><path d="M8 0l7 14H1z" fill="#f00" />
        </Pointer>
        <Watermark $x={139} $y={68} aria-hidden="true">IKLED</Watermark>
        <Watermark $x={306} $y={405} aria-hidden="true">IKLED</Watermark>
      </Window>
    </Page>
  );
}
